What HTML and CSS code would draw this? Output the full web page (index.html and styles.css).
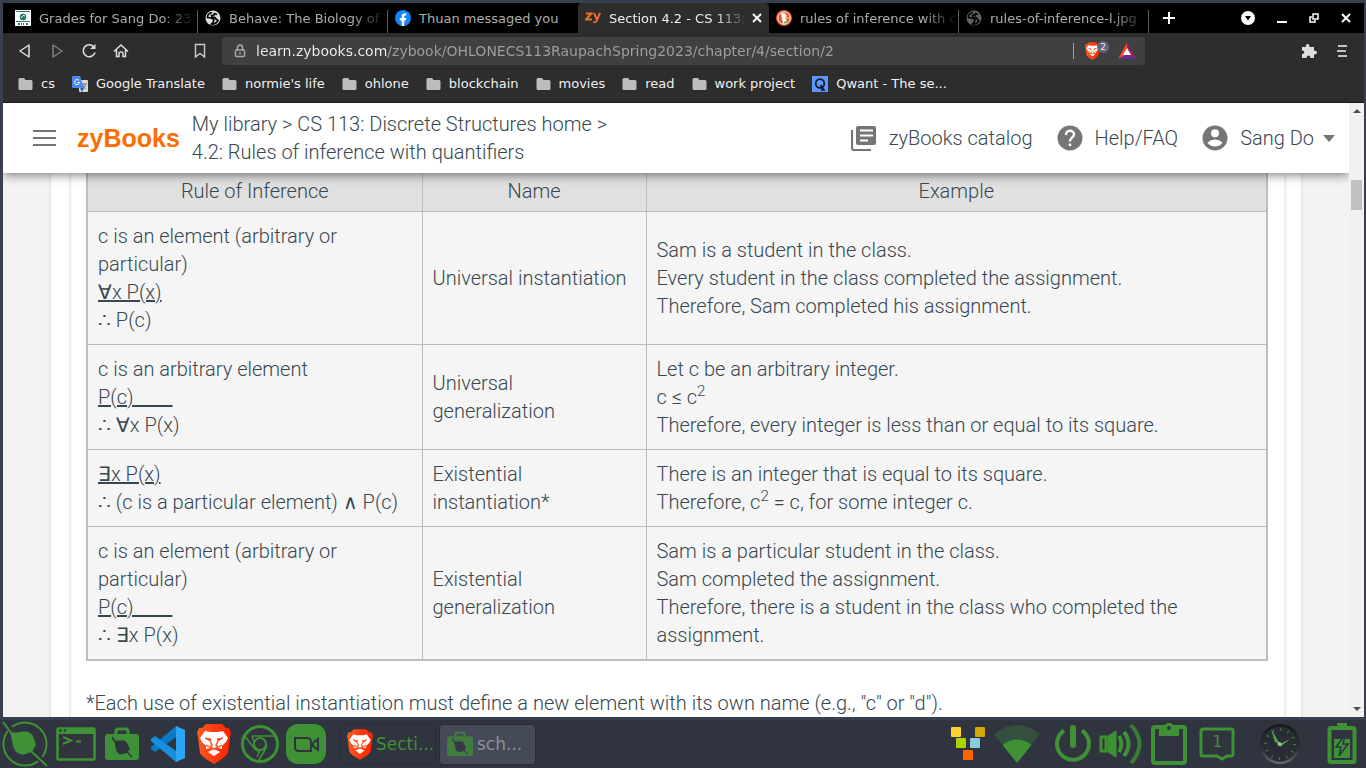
FILE: index.html
```
<!DOCTYPE html>
<html lang="en">
<head>
<meta charset="utf-8">
<title>Section 4.2 - CS 113: Discrete Structures</title>
<link rel="stylesheet" href="styles.css">
</head>
<body>
<svg class="defs" aria-hidden="true">
  <defs>
    <linearGradient id="brave-grad" x1="0" x2="1"><stop offset="0" stop-color="#ff5a1f"/><stop offset="1" stop-color="#ff2000"/></linearGradient>
    <linearGradient id="clock-grad" x1="0" x2="0" y1="0" y2="1"><stop offset="0" stop-color="#15171c"/><stop offset=".6" stop-color="#2c2f37"/><stop offset="1" stop-color="#666a72"/></linearGradient>
    <symbol id="folder" viewBox="0 0 14 12"><path d="M1.500 0H5.500L7 2H12.500Q14 2 14 3.500V10.500Q14 12 12.500 12H1.500Q0 12 0 10.500V1.500Q0 0 1.500 0Z" fill="#bdbdbd"/></symbol>
    <symbol id="globe" viewBox="0 0 16 16"><circle cx="8" cy="8" r="7.500" fill="currentColor"/><path d="M7 2.500C4 3 2.500 5.500 2.500 7.500L6 8C7 8.500 8 8.500 9 9.500L8 12.500L6.500 14C9 14.500 12 13 13 10.500L11.500 9.500L10 7.500L7 7L6.500 5.500L9 5L9.500 3.500L12 4.500" fill="none" stroke="#000" stroke-width="1.700"/></symbol>
    <symbol id="lion" viewBox="0 0 34 40"><path d="M9 0H25L29 4L32 4L34 9L33 13L31 29Q29 33 17 40Q5 33 3 29L1 13L0 9L2 4L5 4Z" fill="url(#brave-grad)"/><path d="M8 7L13 8H21L26 7L31 14L29 18L25 22L25 25L21 24L17 25L13 24L9 25L9 22L5 18L3 14Z" fill="#fff"/><path d="M11 28L17 25L23 28L17 32Z" fill="#fff"/><path d="M8 14L14 15L13 17ZM26 14L20 15L21 17Z" fill="#fb4a1c" stroke="#fb4a1c"/><path d="M13 17L15 21L13 23L17 25L21 23L19 21L21 17M9 21L12 23M25 21L22 23" fill="none" stroke="#fb4a1c" stroke-width="1.400"/></symbol>
    <symbol id="case" viewBox="0 0 34 34"><path d="M11 7V4Q11 2 13 2H21Q23 2 23 4V7" fill="none" stroke="currentColor" stroke-width="3"/><rect y="7" width="34" height="26" rx="3" fill="currentColor"/><path d="M9 13C13 15 17 12 20 14C24 17 23 20 25 22L22 26C19 26 17 29 13 26C10 23 11 19 9 13Z" fill="#2f343f"/><path d="M7 10L10 15M22 25L27 30" stroke="#2f343f" stroke-width="1.500"/></symbol>
  </defs>
</svg>

<div class="window">
  <header class="browser">
    <div class="tabs">
      <button class="tab"><svg class="fav" viewBox="0 0 16 16"><path fill="#fff" d="M0 0H16V16H0Z"/><path fill="#35796e" d="M1 1H15V2H1ZM1 11H15V12H1ZM3 13H5V15H3ZM6 13H7V15H6ZM8 13H9V15H8ZM11 13H13V15H11Z"/><circle cx="8" cy="7" r="3.200" fill="#1d7467"/><path d="M6 8Q8 4 10 6" stroke="#fff" fill="none"/></svg><span class="title">Grades for Sang Do: 23S</span></button>
      <button class="tab"><svg class="fav light"><use href="#globe"/></svg><span class="title">Behave: The Biology of</span></button>
      <button class="tab"><svg class="fav" viewBox="0 0 16 16"><circle cx="8" cy="8" r="8" fill="#1685f8"/><path d="M6.700 16V10.500H4.800V8H6.700V6.300C6.700 4.200 8 3.200 9.700 3.200L11.300 3.400V5.400H10.300C9.500 5.400 9.200 5.900 9.200 6.500V8H11.200L10.800 10.500H9.200V16Z" fill="#fff"/></svg><span class="title whole">Thuan messaged you</span></button>
      <button class="tab active"><svg class="fav" viewBox="0 0 16 16"><path d="M1 3.500H6.500L1 9.500H7M9 3L12 9.500M15 3L11.500 11Q11 12.500 8.500 12" stroke="#e8702a" stroke-width="2" fill="none"/></svg><span class="title">Section 4.2 - CS 113:</span><svg class="close" viewBox="0 0 10 10"><path d="M1 1L9 9M9 1L1 9" stroke="#fff" stroke-width="2"/></svg></button>
      <button class="tab"><svg class="fav" viewBox="0 0 16 16"><circle cx="8" cy="8" r="8" fill="#e0522c"/><circle cx="8" cy="8" r="6.200" fill="#e0522c" stroke="#fff"/><path d="M5 3.500Q9 2 10.500 5.500L10 9L11.500 13L7 13.500L5.500 7Z" fill="#fff"/><path d="M9 7.500L13 7L12 9L9 9.500Z" fill="#fdbb25"/><path d="M8 11.500L11.500 11V13L8 13Z" fill="#5eb346"/></svg><span class="title">rules of inference with c</span></button>
      <button class="tab"><svg class="fav dim"><use href="#globe"/></svg><span class="title">rules-of-inference-l.jpg</span></button>
      <button class="plain" aria-label="New tab"><svg width="12" height="12"><path d="M6 0V12M0 6H12" stroke="#fff" stroke-width="2"/></svg></button>
      <div class="controls">
        <button class="plain" aria-label="Search tabs"><svg width="14" height="14"><circle cx="7" cy="7" r="7" fill="#fff"/><path d="M4 5H10L7 9.500Z" fill="#000"/></svg></button>
        <button class="plain" aria-label="Minimize"><svg width="10" height="10"><path d="M0 9H10" stroke="#fff" stroke-width="2"/></svg></button>
        <button class="plain" aria-label="Restore"><svg width="10" height="10"><path d="M4 1H9V6H4ZM3 4H1V9H6V7" stroke="#fff" stroke-width="1.500" fill="none"/></svg></button>
        <button class="plain" aria-label="Close"><svg width="10" height="10"><path d="M1 1L9 9M9 1L1 9" stroke="#fff" stroke-width="2"/></svg></button>
      </div>
    </div>
    <div class="toolbar">
      <div class="nav">
        <button class="plain" aria-label="Back"><svg width="16" height="16"><path d="M12 2V14L3 8Z" fill="none" stroke="#dedede" stroke-width="1.500" stroke-linejoin="round"/></svg></button>
        <button class="plain" aria-label="Forward"><svg width="16" height="16"><path d="M4 2V14L13 8Z" fill="none" stroke="#808080" stroke-width="1.500" stroke-linejoin="round"/></svg></button>
        <button class="plain" aria-label="Reload"><svg width="16" height="16"><path d="M12.500 3.500A6 6 0 1 0 14 9.500" fill="none" stroke="#dedede" stroke-width="1.600"/><path d="M9 6H14.500V1Z" fill="#dedede"/></svg></button>
        <button class="plain" aria-label="Home"><svg width="16" height="16"><path d="M1 8.500L8 2L15 8.500M3.500 7V13.500H6V10Q8 7.500 10 10V13.500H12.500V7" fill="none" stroke="#dedede" stroke-width="1.500"/></svg></button>
      </div>
      <button class="plain mark" aria-label="Bookmark"><svg width="12" height="16"><path d="M1.500 1.500H10.500V14L6 10.500L1.500 14Z" fill="none" stroke="#c8c8c8" stroke-width="1.500"/></svg></button>
      <div class="address">
        <svg width="12" height="14"><path d="M3.500 6V3.500A2.500 2.500 0 0 1 8.500 3.500V6" fill="none" stroke="#a9a9b0" stroke-width="1.500"/><rect x="1.500" y="6" width="9" height="6.500" rx="1" fill="none" stroke="#a9a9b0" stroke-width="1.500"/><circle cx="6" cy="9.300" r="1" fill="#a9a9b0"/></svg>
        <input class="url" aria-label="Address" value="learn.zybooks.com/zybook/OHLONECS113RaupachSpring2023/chapter/4/section/2">
        <span class="sep"></span>
        <button class="plain shield" aria-label="Brave Shields"><svg width="15" height="18"><use href="#lion"/></svg><span class="count">2</span></button>
        <button class="plain" aria-label="Rewards"><svg width="18" height="16"><path d="M9 0L0 16L9 11Z" fill="#ff4724"/><path d="M9 0L18 16L9 11Z" fill="#9e1f63"/><path d="M0 16H18L9 11Z" fill="#662d91"/><path d="M9 5L5 12H13Z" fill="#fff"/></svg></button>
      </div>
      <div class="extras">
        <button class="plain" aria-label="Extensions"><svg width="16" height="16"><path d="M1 4H5C4 0 9 0 8.500 4H13V8C17 7 17 12 13 11.500V15H9.500C9.500 11.500 5.500 11.500 5.500 15H1V11C4 11 4 7.500 1 7.500Z" fill="#dedede"/></svg></button>
        <button class="plain" aria-label="Menu"><svg width="10" height="12"><path d="M1 1H10M0 6H9M1 11H10" stroke="#c4c4c4" stroke-width="2"/></svg></button>
      </div>
    </div>
    <nav class="bookmarks">
      <a href="#"><svg class="dir"><use href="#folder"/></svg>cs</a>
      <a href="#"><svg class="fav" viewBox="0 0 16 16"><rect x="7" y="4" width="9" height="12" rx="1" fill="#d8d8d8"/><path d="M9 8H15M12 7V8M14 8Q13 12 10 13M10.500 9Q12 12 14 13" stroke="#707884" fill="none"/><path d="M1 0H8L12 12H1Q0 12 0 11V1Q0 0 1 0Z" fill="#4b87ec"/><path d="M7 4.500A2.500 2.500 0 1 0 7.500 6.500H5.500" stroke="#fff" fill="none"/><path d="M8 12H12L10 16Z" fill="#2c58b0"/></svg>Google Translate</a>
      <a href="#"><svg class="dir"><use href="#folder"/></svg>normie's life</a>
      <a href="#"><svg class="dir"><use href="#folder"/></svg>ohlone</a>
      <a href="#"><svg class="dir"><use href="#folder"/></svg>blockchain</a>
      <a href="#"><svg class="dir"><use href="#folder"/></svg>movies</a>
      <a href="#"><svg class="dir"><use href="#folder"/></svg>read</a>
      <a href="#"><svg class="dir"><use href="#folder"/></svg>work project</a>
      <a href="#"><svg class="fav" viewBox="0 0 16 16"><rect width="16" height="16" fill="#5c97ff"/><circle cx="8" cy="7.500" r="4.300" fill="none" stroke="#111520" stroke-width="1.800"/><path d="M8.500 9L12 14H9" stroke="#111520" stroke-width="1.600" fill="none"/></svg>Qwant - The se...</a>
    </nav>
  </header>

  <div class="view">
    <div class="page">
      <header class="site">
        <button class="plain" aria-label="Open menu"><svg width="24" height="16"><path d="M1 1H24M1 8H24M1 15H24" stroke="#757575" stroke-width="2"/></svg></button>
        <a class="logo" href="#">zyBooks</a>
        <nav class="crumbs"><a href="#">My library</a> &gt; <a href="#">CS 113: Discrete Structures home</a> &gt;<br>4.2: Rules of inference with quantifiers</nav>
        <nav class="links">
          <a href="#"><svg width="26" height="26"><rect x="5" y="1" width="20" height="19" rx="2" fill="#757575"/><path d="M1 5V23Q1 25 3 25H20" fill="none" stroke="#757575" stroke-width="2.200"/><path d="M9 5.500H22M9 10.500H22M9 15.500H17" stroke="#fff" stroke-width="2"/></svg>zyBooks catalog</a>
          <a href="#"><svg width="26" height="26"><circle cx="13" cy="13" r="12.500" fill="#757575"/><path d="M9 10C9 4.500 17 4.500 17 9.500C17 12.500 13 12.500 13 16.500M13 18.500V21" fill="none" stroke="#fff" stroke-width="2.400"/></svg>Help/FAQ</a>
          <button class="user"><svg width="26" height="26"><circle cx="13" cy="13" r="12.500" fill="#757575"/><circle cx="13" cy="8.300" r="4" fill="#fff"/><path d="M5.500 17.500Q9 14.500 13 14.500T20.500 17.500Q18 21.500 13 21.500T5.500 17.500Z" fill="#fff"/></svg>Sang Do<svg class="caret" width="12" height="7"><path d="M0 0H12L6 7Z" fill="#757575"/></svg></button>
        </nav>
      </header>
      <main class="outer">
        <section class="inner">
          <table>
            <colgroup><col class="c1"><col class="c2"><col></colgroup>
            <thead><tr><th>Rule of Inference</th><th>Name</th><th>Example</th></tr></thead>
            <tbody>
              <tr><td>c is an element (arbitrary or particular)<br><u>∀x P(x)</u><br>∴ P(c)</td><td>Universal instantiation</td><td>Sam is a student in the class.<br>Every student in the class completed the assignment.<br>Therefore, Sam completed his assignment.</td></tr>
              <tr><td>c is an arbitrary element<br><u>P(c)&nbsp;&nbsp;&nbsp;&nbsp;&nbsp;&nbsp;&nbsp;&nbsp;</u><br>∴ ∀x P(x)</td><td>Universal generalization</td><td>Let c be an arbitrary integer.<br>c ≤ c<sup>2</sup><br>Therefore, every integer is less than or equal to its square.</td></tr>
              <tr><td><u>∃x P(x)</u><br>∴ (c is a particular element) ∧ P(c)</td><td>Existential instantiation*</td><td>There is an integer that is equal to its square.<br>Therefore, c<sup>2</sup> = c, for some integer c.</td></tr>
              <tr><td>c is an element (arbitrary or particular)<br><u>P(c)&nbsp;&nbsp;&nbsp;&nbsp;&nbsp;&nbsp;&nbsp;&nbsp;</u><br>∴ ∃x P(x)</td><td>Existential generalization</td><td>Sam is a particular student in the class.<br>Sam completed the assignment.<br>Therefore, there is a student in the class who completed the assignment.</td></tr>
            </tbody>
          </table>
          <p>*Each use of existential instantiation must define a new element with its own name (e.g., "c" or "d").</p>
        </section>
      </main>
    </div>
    <div class="scroll" aria-hidden="true">
      <svg width="8" height="4"><path d="M0 4H8L4 0Z" fill="#505050"/></svg>
      <div class="thumb"></div>
      <svg width="8" height="4"><path d="M0 0H8L4 4Z" fill="#505050"/></svg>
    </div>
  </div>
</div>

<footer class="taskbar">
  <div class="launchers">
    <button class="plain slot first" aria-label="Applications"><svg width="46" height="46"><circle cx="23" cy="23" r="21.500" fill="none" stroke="#3f9135" stroke-width="2"/><path d="M1 1L46 46" stroke="#2f343f" stroke-width="6"/><path d="M8 10C14 14 20 9 26 11C33 14 32 20 34 23C32 28 31 28 30 31C26 31 23 35 18 33C10 30 11 22 10 20Z" fill="#3f9135"/><path d="M1 1L10 13M29 30L45 45" stroke="#3f9135" stroke-width="2"/></svg></button>
    <button class="plain slot" aria-label="Terminal"><svg width="40" height="34"><rect x="1.500" y="1.500" width="37" height="31" rx="1" fill="none" stroke="#3f9135" stroke-width="2.600"/><path d="M1 1H39V7H1Z" fill="#3f9135"/><circle cx="4.500" cy="3.500" r="1.300" fill="#2f343f"/><circle cx="9" cy="3.500" r="1.300" fill="#2f343f"/><path d="M7 10L15 13.500L7 17M20 14.500H25" stroke="#3f9135" stroke-width="2" fill="none"/></svg></button>
    <button class="plain slot" aria-label="Files"><svg class="green" width="34" height="34"><use href="#case"/></svg></button>
    <button class="plain slot" aria-label="Code"><svg width="36" height="36"><path d="M26 0V11L5 26L1 23V21Z" fill="#0b78c5"/><path d="M26 36V25L5 10L1 13V15Z" fill="#1690dc"/><path d="M26 0L35 4V32L26 36Z" fill="#2ba6f3"/></svg></button>
    <button class="plain slot" aria-label="Brave"><svg width="34" height="40"><use href="#lion"/></svg></button>
    <button class="plain slot" aria-label="Chromium"><svg width="40" height="40" fill="none" stroke="#3f9135"><circle cx="20" cy="20" r="17.500" stroke-width="3"/><circle cx="20" cy="20" r="6" stroke-width="2"/><path d="M12 12H35M4 11L14 24Q17 28 20 27M12 12L14 18M27 22L18 38M20 27L17 33" stroke-width="1.600"/></svg></button>
    <button class="plain slot" aria-label="Zoom"><svg width="40" height="40"><rect width="40" height="40" rx="12" fill="#3f9135"/><path d="M9 14H21Q25 14 25 18V27H13Q9 27 9 23ZM27 19L32 15V26L27 22Z" fill="#3f9135" stroke="#2f343f" stroke-width="2"/></svg></button>
  </div>
  <button class="task"><svg width="26" height="31"><use href="#lion"/></svg>Secti...</button>
  <button class="task faded"><svg class="green" width="26" height="26"><use href="#case"/></svg>sch...</button>
  <div class="tray">
    <div class="slot squares"><svg width="36" height="34"><rect x="1" width="10" height="10" rx="1" fill="#ffd02f"/><rect x="25" width="10" height="10" rx="1" fill="#d4aa00"/><rect x="6" y="11" width="10" height="10" rx="1" fill="#aad400"/><rect x="20" y="11" width="10" height="10" rx="1" fill="#87cdde"/><rect x="13" y="23" width="10" height="10" rx="1" fill="#ff6600"/></svg></div>
    <div class="slot"><svg width="46" height="38"><path d="M0 9Q23-9 46 9L23 38Z" fill="#344f3d"/><path d="M8.500 20Q23 9 37.500 20L23 38Z" fill="#3f9135"/></svg></div>
    <div class="slot group"><svg width="38" height="38"><path d="M10 5.500A16 16 0 1 0 28 5.500" fill="none" stroke="#3f9135" stroke-width="4"/><path d="M19 3V20" stroke="#3f9135" stroke-width="6" stroke-linecap="round"/></svg></div>
    <div class="slot"><svg width="44" height="42" fill="none" stroke="#3f9135"><path d="M2 14H7V28H2Z" stroke-width="3"/><path d="M9 13L17 8V34L9 29Z" fill="#3f9135"/><path d="M20 13Q25 21 20 29M25 9Q34 21 25 33" stroke-width="4"/><path d="M32 2Q49 21 32 40" stroke="#397c35" stroke-width="4"/></svg></div>
    <div class="slot"><svg width="36" height="42"><rect x="2" y="4" width="32" height="36" rx="2" fill="none" stroke="#3f9135" stroke-width="4"/><path d="M8 4H13Q14 0 18 0T23 4H28V13H8Z" fill="#3f9135"/><circle cx="18" cy="5" r="2" fill="#2f343f"/></svg></div>
    <div class="slot note"><svg width="36" height="34"><path d="M4 2H32Q34 2 34 4V27Q34 29 32 29H28L23 32L18 29H4Q2 29 2 27V4Q2 2 4 2Z" fill="none" stroke="#3f9135" stroke-width="3"/></svg><span>1</span></div>
    <div class="slot clock"><svg width="42" height="44"><circle cx="21" cy="22" r="20" fill="url(#clock-grad)"/><circle cx="21" cy="22" r="17.500" fill="#292c34"/><circle cx="21" cy="22" r="14.500" fill="none" stroke="#3f9135" stroke-width="3" stroke-dasharray="1 6.590"/><path d="M21 22L12 7L16 20ZM21 22L31 17L21 25Z" fill="#4eae43"/><circle cx="20.500" cy="22" r="2" fill="#aab8aa"/></svg></div>
    <div class="slot battery"><svg width="30" height="42"><path d="M10 0H20V4H10Z" fill="#3f9135"/><rect x="2.500" y="5" width="25" height="34" rx="1.500" fill="none" stroke="#3f9135" stroke-width="4"/><path d="M7 16H23V35H7Z" fill="#3f9135"/><path d="M18 12L9 24H14L12 33L21 21H16Z" fill="#3f9135" stroke="#2f343f" stroke-width="1.500"/></svg></div>
  </div>
</footer>
</body>
</html>
```
FILE: styles.css
```
* { box-sizing: border-box; }
body {
  margin: 0;
  height: 100vh;
  display: flex;
  flex-direction: column;
  overflow: hidden;
  background: #3a3f50;
  font-family: "DejaVu Sans", sans-serif;
  font-size: 13px;
}
svg { flex: none; display: block; }
a { color: inherit; text-decoration: none; }
.defs { position: absolute; width: 0; height: 0; }
button { font: inherit; color: inherit; border: 0; background: none; padding: 0; }
.plain { display: flex; align-items: center; justify-content: center; }

.window {
  flex: 1;
  min-height: 0;
  margin: 3px 2px 3px 3px;
  display: flex;
  flex-direction: column;
}
.browser { background: #2d2d2d; color: #f0f0f0; border-bottom: 1px solid #1c1c1c; }

.tabs { display: flex; height: 30px; padding-left: 5px; background: #000; }
.tab {
  flex: 0 1 190px;
  min-width: 0;
  display: flex;
  align-items: center;
  gap: 8px;
  padding: 0 2px 0 7px;
  color: #adadad;
  text-align: left;
  background: linear-gradient(#5a5a5a, #5a5a5a) right bottom / 1px 23px no-repeat;
}
.tab.active { flex-basis: 191px; padding-right: 7px; background: #2d2d2d; color: #f0f0f0; border-radius: 4px 4px 0 0; }
.tab.active .title { margin-right: -4px; }
.tab:nth-child(3) { background: none; }
.fav { width: 16px; height: 16px; }
.fav.light { color: #dedede; }
.fav.dim { color: #5f6368; }
.title {
  flex: 1;
  min-width: 0;
  overflow: hidden;
  white-space: nowrap;
  mask-image: linear-gradient(90deg, #000 calc(100% - 34px), transparent);
}
.title.whole { mask-image: none; }
.close { width: 10px; height: 10px; }
.tabs > .plain { width: 40px; }
.controls { margin-left: auto; display: flex; align-items: center; gap: 22px; padding-right: 13px; }

.toolbar { display: flex; align-items: center; height: 36px; }
.nav { display: flex; gap: 16px; padding-left: 14px; }
.mark { margin: 0 16px 0 65px; }
.address {
  flex: 1;
  display: flex;
  align-items: center;
  height: 28px;
  padding: 0 9px 0 12px;
  border-radius: 4px;
  background: #404040;
}
.url {
  flex: 1;
  min-width: 0;
  margin-left: 10px;
  padding: 0;
  border: 0;
  outline: 0;
  font: 14px "DejaVu Sans", sans-serif;
  color: transparent;
  background: linear-gradient(90deg, #f0f0f0 132px, #a0a0a0 132px);
  background-clip: text;
}
.sep { width: 1px; height: 16px; margin-right: 11px; background: #a0a0a0; }
.shield { position: relative; margin-right: 18px; }
.count {
  position: absolute;
  left: 12px;
  top: -1px;
  width: 12px;
  border-radius: 6px;
  background: #62647a;
  font-size: 9px;
  line-height: 12px;
}
.extras { display: flex; gap: 20px; padding: 0 17px 0 156px; }

.bookmarks { display: flex; gap: 17px; height: 33px; padding: 0 15px 4px; align-items: center; white-space: nowrap; }
.bookmarks a { display: flex; align-items: center; gap: 8px; }
.dir { width: 15px; height: 12px; }

.view { flex: 1; min-height: 0; display: flex; }
.page {
  flex: 1;
  min-width: 0;
  overflow: hidden;
  background: #f3f3f3;
  color: #37474f;
  font: 300 20px/28px Roboto, sans-serif;
}
.site {
  position: relative;
  display: flex;
  align-items: center;
  min-height: 70px;
  padding: 7px 14px 7px 29px;
  background: #fff;
  box-shadow: 0 2px 10px rgba(0, 0, 0, .5);
}
.logo { margin: 0 12px 0 21px; font: bold 25px "Liberation Sans", sans-serif; color: #ff6c00; }
.links { margin-left: auto; display: flex; gap: 24px; }
.links a, .user { display: flex; align-items: center; gap: 12px; }
.user .caret { margin-left: -3px; }
.outer { margin: 0 48px; padding: 0 17px 0 20px; background: #fff; box-shadow: 0 0 3px rgba(0, 0, 0, .15); }
.inner { padding: 0 16px 20px 15px; background: #fff; box-shadow: 0 0 4px rgba(0, 0, 0, .2); }
table { width: 100%; border-collapse: collapse; table-layout: fixed; border: 2px solid #bdbdbd; border-top: 0; }
.c1 { width: 335px; }
.c2 { width: 224px; }
th { padding: 4px 10px 6px; font-weight: 300; background: #e0e0e0; }
td { padding: 10px; background: #f5f5f5; }
th, td { border: 1px solid #bdbdbd; }
th { border-top: 0; }
sup { font-size: 15px; line-height: 0; }
p { margin: 28px 0 0; }

.scroll { width: 15px; display: flex; flex-direction: column; align-items: center; padding: 6px 0; background: #f1f1f1; }
.thumb { width: 11px; height: 30px; margin: 67px 0 auto; background: #c1c1c1; }

.taskbar { display: flex; align-items: center; height: 48px; background: #2f343f; color: #3f9135; }
.launchers { display: flex; padding: 0 10px 0 2px; }
.slot { display: flex; align-items: center; justify-content: center; width: 46px; height: 48px; }
.first { margin-right: 5px; }
.green { color: #3f9135; }
.task {
  display: flex;
  align-items: center;
  gap: 3px;
  width: 97px;
  height: 41px;
  margin-right: 3px;
  padding-left: 7px;
  border: 1px solid #292c37;
  border-radius: 4px;
  font-size: 17px;
}
.faded { background: #454a59; color: #8b8f99; gap: 4px; }
.faded svg { opacity: .7; }
.tray { display: flex; margin-left: auto; }
.tray .slot { width: 48px; }
.tray .squares { margin-right: 1px; }
.tray .group { margin-left: 8px; }
.tray .clock { margin-left: 15px; }
.tray .battery { margin-left: 14px; }
.note { position: relative; font: 16px "DejaVu Sans Mono", monospace; }
.note span { position: absolute; top: 12px; }
```
